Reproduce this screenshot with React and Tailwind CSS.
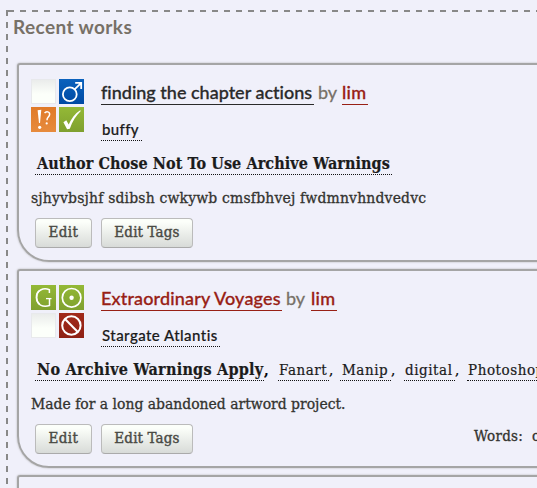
import React from "react";

const sans = "font-['Lato','Open_Sans',sans-serif] [font-variant-ligatures:none]";
const serif = "font-['DejaVu_Serif_Condensed','DejaVu_Serif',serif]";

function Tile({ kind }) {
  const bg = {
    blank: "bg-linear-to-b from-[#e9ebea] to-[#fcfffa] to-60% outline outline-1 -outline-offset-1 outline-[#e8e9ec]",
    male: "bg-linear-to-b from-[#0b62bd] to-[#0049a3]",
    warn: "bg-linear-to-b from-[#e07a28] to-[#e78b3d]",
    done: "bg-linear-to-b from-[#94b936] to-[#7fa02f]",
    general: "bg-linear-to-b from-[#94b936] to-[#7fa02f]",
    dot: "bg-linear-to-b from-[#94b936] to-[#7fa02f]",
    no: "bg-linear-to-b from-[#a12a1b] to-[#8f2114]",
  }[kind];
  return (
    <div className={"size-[25px] " + bg}>
      <svg viewBox="0 0 25 25" className="block size-[25px]" fill="none" stroke="#fff">
        {kind === "male" && (
          <g strokeWidth="1.8">
            <circle cx="10.8" cy="15.3" r="6.9" />
            <path d="M15.6 10.3 L22 4.2 M16.2 3.9 H22.2 V10" />
          </g>
        )}
        {kind === "warn" && (
          <g>
            <path d="M6.6 3.3 L10.3 2.8 L9 16 L8 16 Z" fill="#fff" stroke="none" />
            <circle cx="8.7" cy="20.3" r="1.6" fill="#fff" stroke="none" />
            <path d="M13.6 6.2 C15 4 19 4.4 18.6 7.6 C18.2 10.2 15.8 10 16 13.2" strokeWidth="1.5" />
            <circle cx="15.7" cy="16.4" r="1.1" fill="#fff" stroke="none" />
          </g>
        )}
        {kind === "done" && (
          <path d="M4.4 15.2 L7.3 13.2 L9.7 17.4 C12 12 16 6.5 21.2 3.2 L21.8 4 C17 8.5 13.4 14.5 10.8 21.8 L8.1 22.2 Z" fill="#fff" stroke="none" />
        )}
        {kind === "general" && (
          <g>
            <path d="M18.4 8 V4.8 C12.5 2.2 5.2 5.4 5.4 12.6 C5.5 19.8 12 22.6 18.5 20.5 V14" strokeWidth="1.5" />
            <path d="M8.2 5.8 C4.6 9 4.8 16.6 8.8 19.5" strokeWidth="1.5" />
            <path d="M15 13.6 H20.5" strokeWidth="1.3" />
          </g>
        )}
        {kind === "dot" && (
          <g>
            <circle cx="12.6" cy="12.8" r="9.3" strokeWidth="1.7" />
            <circle cx="12.6" cy="12.8" r="2.2" fill="#fff" stroke="none" />
          </g>
        )}
        {kind === "no" && (
          <g strokeWidth="2">
            <circle cx="12.4" cy="12.5" r="9.2" />
            <path d="M6 6 L18.8 19" />
          </g>
        )}
      </svg>
    </div>
  );
}

function Button({ className, children }) {
  return (
    <button
      className={
        "flex h-[30px] items-center justify-center rounded-[4px] border border-[#bbb] border-b-[#aaa] bg-linear-to-b from-[#fcfffa] from-10% to-[#d8dbd8] pb-[2px] text-[15px] text-[#4a4a44] [-webkit-text-stroke:0.4px_#4a4a44] " +
        className
      }
    >
      {children}
    </button>
  );
}

const cardFrame =
  "ml-[9px] w-[600px] rounded-tl-[3px] border-2 border-[#a5a5a5] shadow-[0_0_2px_#aaa]";

function Tag({ className, children }) {
  return (
    <span className={"border-b border-dotted border-[#111] text-[#1b1b1b] " + className}>
      {children}
    </span>
  );
}

function Card({ tiles, title, author, fandom, tags, summary, words }) {
  return (
    <article className={cardFrame + " mb-[7px] h-[199px] rounded-bl-[32px] pl-[12px] pt-[14px]"}>
      <div className="flex h-[72px]">
        <div className="mr-[17px] grid h-[53px] grid-cols-[25px_25px] gap-[3px]">
          {tiles.map((k, i) => (
            <Tile key={i} kind={k} />
          ))}
        </div>
        <div className={sans}>
          <h4 className="flex h-[26px] text-[18px] leading-[26px] text-[#777067] [-webkit-text-stroke:0.3px_currentColor]">
            {title}
            {author}
          </h4>
          <div className="mt-[16px] flex h-[20px] text-[15px] leading-[17px] font-medium tracking-[0.35px] [-webkit-text-stroke:0.2px_currentColor]">{fandom}</div>
        </div>
      </div>
      <div className="ml-[4px] mt-[2px] flex h-[22px] text-[15px] leading-[22px] tracking-[0.55px] [-webkit-text-stroke:0.2px_currentColor]">{tags}</div>
      <div className="mt-[12px] h-[24px] text-[15.5px] leading-[23px] text-[#33332f] [-webkit-text-stroke:0.3px_#33332f]">{summary}</div>
      <div className="ml-[4px] mt-[7px] flex">
        <Button className="w-[57px] tracking-[0.4px]">Edit</Button>
        <Button className="ml-[9px] w-[92px] tracking-[0.15px]">Edit Tags</Button>
        {words}
      </div>
    </article>
  );
}

export default function App() {
  return (
    <div className={"h-[488px] w-[537px] overflow-hidden whitespace-nowrap bg-[#f0f0fa] pl-[6px] pt-[10px] " + serif}>
      <div className="h-[2px] w-[531px] bg-[repeating-linear-gradient(to_right,#888_0_6px,transparent_6px_12px)] bg-[position:2px_0]" />
      <div className="flex h-[476px]">
        <div className="w-[2px] shrink-0 bg-[repeating-linear-gradient(to_bottom,#888_0_4px,transparent_4px_10px,#888_10px_12px)]" />
        <div className="min-w-0 flex-1">
          <h3 className={"ml-[5px] h-[51px] pt-[2px] text-[19px] leading-[25px] font-bold tracking-[0.4px] text-[#777067] " + sans}>
            Recent works
          </h3>
          <Card
            tiles={["blank", "male", "warn", "done"]}
            title={<span className="w-[213px] border-b border-[#2a2a2a] font-medium text-[#2a2a2a]">finding the chapter actions</span>}
            author={
              <>
                <span className="ml-[4px] w-[24px]">by</span>
                <span className="w-[26px] border-b border-[#982015] font-medium tracking-[0.3px] text-[#982015]">lim</span>
              </>
            }
            fandom={<Tag className="w-[41px] pl-[1px]">buffy</Tag>}
            tags={<Tag className="w-[357px] pl-[2px] text-[16px] font-bold tracking-[0.08px]">Author Chose Not To Use Archive Warnings</Tag>}
            summary={<p className="tracking-[0.18px]">sjhyvbsjhf sdibsh cwkywb cmsfbhvej fwdmnvhndvedvc</p>}
          />
          <Card
            tiles={["general", "dot", "blank", "no"]}
            title={<span className="w-[181px] border-b border-[#982015] font-medium tracking-[0.15px] text-[#982015]">Extraordinary Voyages</span>}
            author={
              <>
                <span className="ml-[4px] w-[25px]">by</span>
                <span className="w-[26px] border-b border-[#982015] font-medium tracking-[0.3px] text-[#982015]">lim</span>
              </>
            }
            fandom={<Tag className="w-[119px] pl-[1px] tracking-[0.45px]">Stargate Atlantis</Tag>}
            tags={
              <>
                <Tag className="w-[229px] pl-[2px] text-[16px] font-bold tracking-[0.25px]">No Archive Warnings Apply</Tag>
                <b className="w-[14px]">,</b>
                <Tag className="w-[51px] pl-[1px]">Fanart</Tag>
                <span className="w-[11px]">,</span>
                <Tag className="w-[51px] pl-[2px]">Manip</Tag>
                <span className="w-[13px]">,</span>
                <Tag className="w-[51px] pl-[1px]">digital</Tag>
                <span className="w-[12px]">,</span>
                <Tag className="w-[80px] pl-[1px]">Photoshop</Tag>
              </>
            }
            summary={<p>Made for a long abandoned artword project.</p>}
            words={<span className="ml-[281px] text-[15px] leading-[24px] tracking-[0.25px] text-[#33332f] [-webkit-text-stroke:0.3px_#33332f]">Words:&nbsp; o</span>}
          />
          <div className={cardFrame + " h-[60px]"} />
        </div>
      </div>
    </div>
  );
}
